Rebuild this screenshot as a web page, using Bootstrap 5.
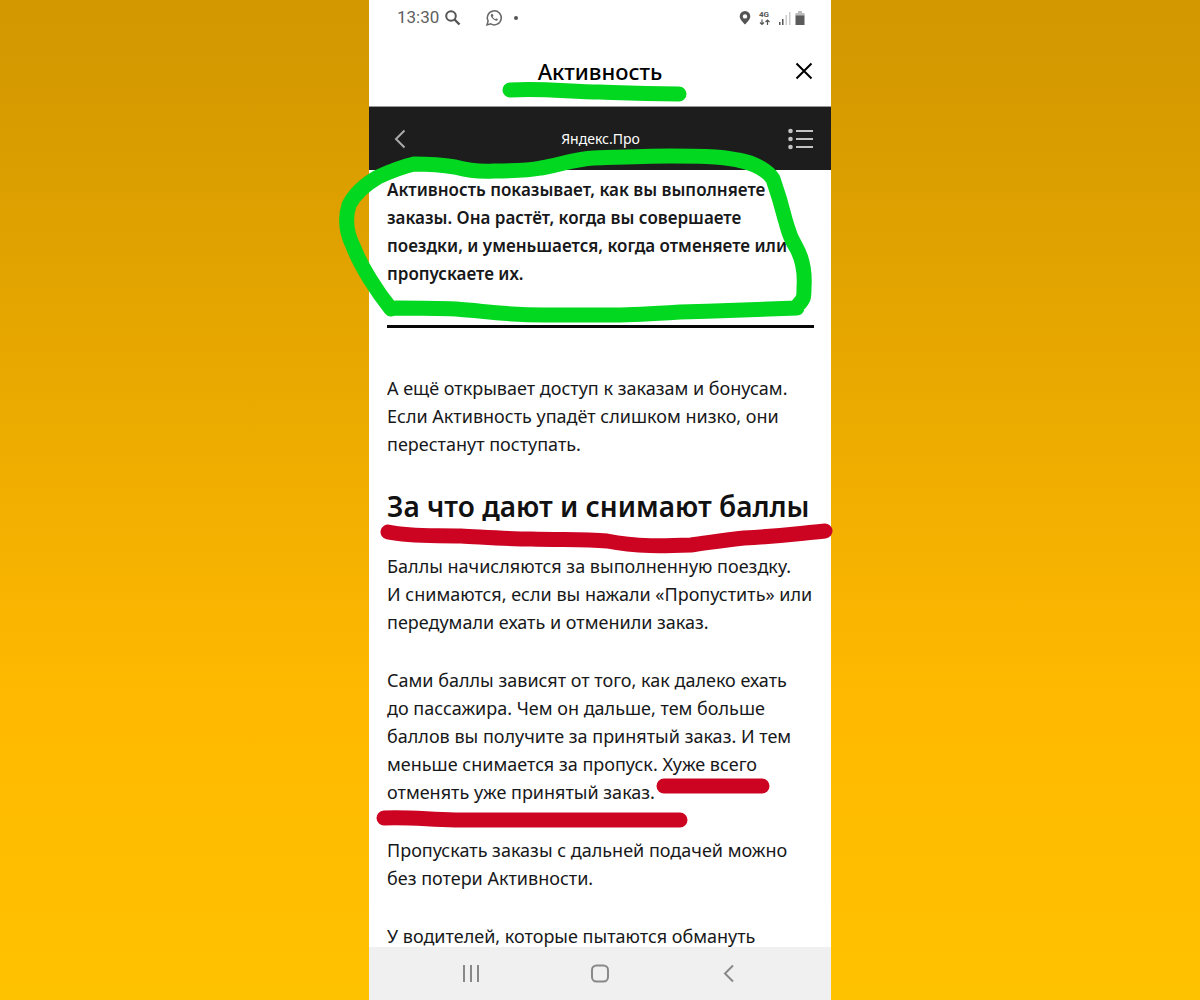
<!DOCTYPE html>
<html lang="ru">
<head>
<meta charset="utf-8">
<meta name="viewport" content="width=device-width, initial-scale=1">
<title>Активность</title>
<link href="https://cdn.jsdelivr.net/npm/bootstrap@5.3.0/dist/css/bootstrap.min.css" rel="stylesheet">
<style>
  body { font-family: "Noto Sans", "Open Sans", sans-serif; background: linear-gradient(#d39800 0, #d59a00 8%, #ffb900 70%, #ffc200 100%); color: #17181a; }
  .phone { max-width: 462px; }
  .status { font: 17px/35px Roboto, sans-serif; color: #606060; padding: 0 26px 0 28px; }
  .app-title { height: 72px; border-bottom: 1px solid #999; }
  .app-title h1 { font-size: 22px; line-height: 30px; font-weight: 500; color: #000; }
  .site-bar { height: 63px; background: #1d1d1d; color: #fff; font-size: 14px; padding: 0 17px 0 18px; }
  .site-bar .btn, .app-title .btn, .nav-keys .btn { line-height: 0; }
  .article { font-size: 18px; line-height: 28px; padding: 6px 17px 0 18px; }
  .article p { margin-bottom: 30px; }
  .article .intro { font-size: 17px; font-weight: 600; padding-bottom: 37px; margin-bottom: 46px; border-bottom: 3px solid #080808; }
  .article h2 { font-size: 28px; line-height: 36px; font-weight: 600; margin: 0 0 28px; white-space: nowrap; color: #111; }
  .nav-keys { height: 53px; gap: 110px; background: #f0f0f0; }
  .marker { left: 0; top: 0; overflow: visible; pointer-events: none; }
</style>
</head>
<body>
<div class="phone position-relative mx-auto vh-100 d-flex flex-column bg-white">
  <div class="status d-flex align-items-center">
    <span>13:30</span>
    <svg class="ms-1" width="18" height="18" viewBox="0 0 18 18" fill="none" stroke="#555" stroke-width="2"><circle cx="8" cy="7" r="4.8"/><path d="M11.5 10.5l5 5" stroke-width="2.4"/></svg>
    <svg class="ms-4" width="18" height="18" viewBox="0 0 18 18" fill="none" stroke="#666" stroke-width="1.5"><path d="M2 16l1.1-3.9A7 7 0 1 1 5.800 14.900z"/><path d="M6.300 5.200c-.9.8-.6 2.400 1.300 4.300s3.900 2.800 4.900 1.800c.7-.8.2-1.200-.9-1.700-.8-.4-.8.9-1.600.5-1-.6-1.700-1.300-2.200-2.200-.3-.6.8-.8.5-1.500-.4-1-.9-2.200-2-1.200z" fill="#666" stroke="none"/></svg>
    <svg class="ms-2" width="10" height="10" viewBox="0 0 10 10"><circle cx="5" cy="5" r="2" fill="#555"/></svg>
    <svg class="ms-auto me-2" width="12" height="14" viewBox="0 0 12 14"><path d="M6 0a5.300 5.300 0 0 1 5.300 5.300C11.300 8.500 8 11.500 6 13.500 4 11.500.7 8.500.7 5.300A5.300 5.300 0 0 1 6 0zm0 3.200a2.200 2.200 0 1 0 0 4.400 2.200 2.200 0 0 0 0-4.400z" fill="#555" fill-rule="evenodd"/></svg>
    <svg width="12" height="16" viewBox="0 0 12 16" fill="none" stroke="#555" stroke-width="1.200"><text x="0" y="7" font-family="Roboto" font-size="8" font-weight="700" fill="#555" stroke="none">4G</text><path d="M3 9.500v5M1 12.500l2 2 2-2M8.500 15v-5M6.500 12l2-2 2 2"/></svg>
    <svg class="ms-2" width="12" height="14" viewBox="0 0 12 14"><path d="M0 11h1.500v3H0zM3 8h1.500v6H3z" fill="#555"/><path d="M6.500 4H8v10H6.500zM10 1h1.500v13H10z" fill="#ccc"/></svg>
    <svg class="ms-1" width="10" height="14" viewBox="0 0 10 14"><path d="M3 0h4v2h2.500v3H.5V2H3z" fill="#bbb"/><path d="M.5 4.500h9V14h-9z" fill="#5b5b5b"/></svg>
  </div>

  <header class="app-title position-relative d-flex align-items-center justify-content-center flex-shrink-0">
    <h1 class="mb-0">Активность</h1>
    <button class="btn p-0 border-0 position-absolute end-0 me-3" type="button" aria-label="Закрыть">
      <svg width="22" height="22" viewBox="0 0 22 22" stroke="#000" stroke-width="2"><path d="M3.500 3.500l15 15m0-15l-15 15"/></svg>
    </button>
  </header>

  <nav class="site-bar d-flex align-items-center justify-content-between flex-shrink-0" aria-label="Яндекс.Про">
    <button class="btn p-0 border-0" type="button" aria-label="Назад">
      <svg width="26" height="20" viewBox="0 0 26 20" fill="none" stroke="#aaa" stroke-width="2"><path d="M17.500 1.500L9 10l8.500 8.500"/></svg>
    </button>
    <span>Яндекс.Про</span>
    <button class="btn p-0 border-0" type="button" aria-label="Содержание">
      <svg width="26" height="22" viewBox="0 0 26 22" fill="#c4c4c4"><circle cx="2.500" cy="3" r="2.300"/><circle cx="2.500" cy="11" r="2.300"/><circle cx="2.500" cy="19" r="2.300"/><path d="M8 2h17v2H8zm0 8h17v2H8zm0 8h17v2H8z"/></svg>
    </button>
  </nav>

  <main class="article flex-grow-1 overflow-hidden">
    <p class="intro">Активность показывает, как вы выполняете<br>заказы. Она растёт, когда вы совершаете<br>поездки, и уменьшается, когда отменяете или<br>пропускаете их.</p>
    <p>А ещё открывает доступ к заказам и бонусам.<br>Если Активность упадёт слишком низко, они<br>перестанут поступать.</p>
    <h2>За что дают и снимают баллы</h2>
    <p>Баллы начисляются за выполненную поездку.<br>И снимаются, если вы нажали «Пропустить» или<br>передумали ехать и отменили заказ.</p>
    <p>Сами баллы зависят от того, как далеко ехать<br>до пассажира. Чем он дальше, тем больше<br>баллов вы получите за принятый заказ. И тем<br>меньше снимается за пропуск. Хуже всего<br>отменять уже принятый заказ.</p>
    <p>Пропускать заказы с дальней подачей можно<br>без потери Активности.</p>
    <p class="mb-0">У водителей, которые пытаются обмануть</p>
  </main>

  <footer class="nav-keys d-flex align-items-center justify-content-center flex-shrink-0">
    <button class="btn p-0 border-0" type="button" aria-label="Недавние"><svg width="18" height="20" viewBox="0 0 18 20" fill="#888"><path d="M1 1h2v17H1zm7 0h2v17H8zm7 0h2v17h-2z"/></svg></button>
    <button class="btn p-0 border-0" type="button" aria-label="Домой"><svg width="20" height="20" viewBox="0 0 20 20" fill="none" stroke="#888" stroke-width="2"><rect x="2" y="1.500" width="16" height="16" rx="4.500"/></svg></button>
    <button class="btn p-0 border-0" type="button" aria-label="Назад"><svg width="18" height="20" viewBox="0 0 18 20" fill="none" stroke="#888" stroke-width="2"><path d="M13 1.500L5 9.500l8 8"/></svg></button>
  </footer>

  <!-- Hand-drawn marker strokes over the page -->
  <svg class="marker position-absolute" width="462" height="1000" viewBox="369 0 462 1000" fill="none" stroke-width="15" stroke-linecap="round" stroke-linejoin="round" aria-hidden="true">
    <g stroke="#02d81f">
      <path d="M510 90C545 88 570 92 600 92C625 93 640 94 679 94"/>
      <path d="M391 309C378 293 361 267 353 246C346 232 345 218 349 205C355 193 366 184 378 177C389 172 401 167 414 164C431 164 443 165 455 167C470 171 480 172 494 171C511 171 526 171 541 168C559 165 575 159 594 158C622 157 645 156 670 156C695 156 719 156 738 160C755 163 768 171 773 179C779 196 782 207 785 219C788 228 788 234 796 247C803 259 805 273 804 288C804 297 804 299 798 305L797 308C762 309 720 311 680 312C650 314 635 315 615 315L545 315C503 315 485 311 456 309C434 308 416 308 396 308Z"/>
    </g>
    <g stroke="#cc0422">
      <path d="M388 532C411 537 435 535 461 536C482 537 507 539 531 539C561 540 584 539 607 541C637 547 664 546 691 545C707 543 724 540 744 538C782 536 794 534 825 531"/>
      <path d="M664 786H762"/>
      <path d="M384 818C408 817 423 819 455 820H680"/>
    </g>
  </svg>
</div>
<script src="https://cdn.jsdelivr.net/npm/bootstrap@5.3.0/dist/js/bootstrap.bundle.min.js"></script>
</body>
</html>
